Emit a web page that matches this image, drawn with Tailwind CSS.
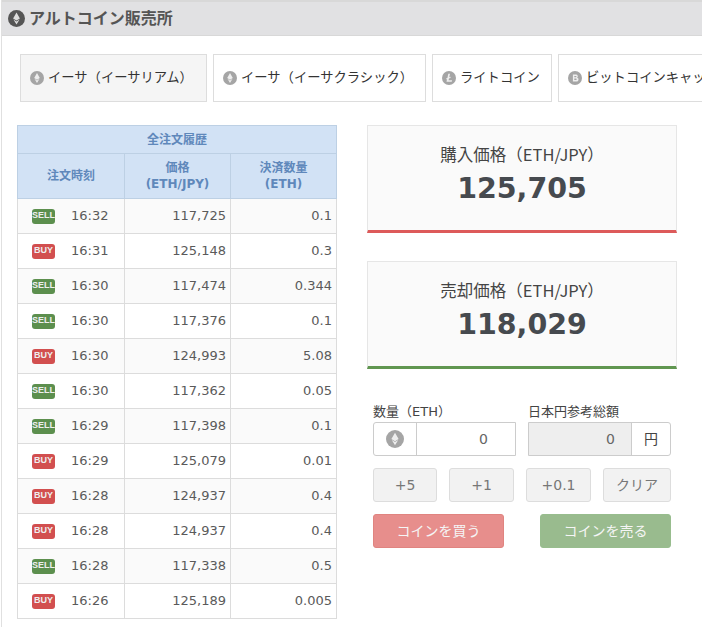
<!DOCTYPE html><html lang="ja">
<head>
  <meta charset="UTF-8">
  <title>アルトコイン販売所</title>
  <script src="https://cdn.jsdelivr.net/npm/@tailwindcss/browser@4"></script>
</head>
<body class="bg-white text-[#444] overflow-hidden h-[627px] font-['DejaVu_Sans','Noto_Sans_CJK_JP',sans-serif]">
  <div class="ml-px border-l border-[#e0e0e0] h-[627px] overflow-hidden">
    <!-- header -->
    <div class="h-9 border-t-2 border-b border-[#d8d8d8] bg-[#e1e1e3] flex items-center pl-1.5 gap-1 text-base font-bold text-[#555]">
      <svg width="17" height="17" viewBox="0 0 20 20"><circle cx="10" cy="10" r="10" fill="#555"/><path d="M10 3l4 7-4 2.400L6 10zM6.400 11.200L10 13.400l3.600-2.200L10 17z" fill="#ddd"/></svg>
      <span>アルトコイン販売所</span>
    </div>

    <!-- coin tabs -->
    <div class="flex gap-1.5 mt-[18px] ml-[18px] w-[800px] text-[13.300px] text-[#333]">
      <div class="w-[187px] h-12 border border-[#ddd] bg-[#f5f5f5] flex items-center pl-[9px] gap-1">
        <svg width="14" height="14" viewBox="0 0 20 20"><circle cx="10" cy="10" r="10" fill="#a5a5a5"/><path d="M10 3l4 7-4 2.400L6 10zM6.400 11.200L10 13.400l3.600-2.200L10 17z" fill="#eee"/></svg>
        <span>イーサ（イーサリアム）</span>
      </div>
      <div class="w-[213px] h-12 border border-[#ddd] flex items-center pl-[9px] gap-1">
        <svg width="14" height="14" viewBox="0 0 20 20"><circle cx="10" cy="10" r="10" fill="#a5a5a5"/><path d="M10 3l4 7-4 2.400L6 10zM6.400 11.200L10 13.400l3.600-2.200L10 17z" fill="#eee"/></svg>
        <span>イーサ（イーサクラシック）</span>
      </div>
      <div class="w-[120px] h-12 border border-[#ddd] flex items-center pl-[9px] gap-1">
        <svg width="14" height="14" viewBox="0 0 20 20"><circle cx="10" cy="10" r="10" fill="#a5a5a5"/><path d="M9 4h2.400l-1 5 2-.8-.4 1.700-2 .8-.6 2.600h5l-.5 2H6.400l.9-3.800-1.500.6.400-1.600 1.500-.6z" fill="#eee"/></svg>
        <span>ライトコイン</span>
      </div>
      <div class="w-[220px] h-12 border border-[#ddd] flex items-center pl-[9px] gap-1">
        <svg width="14" height="14" viewBox="0 0 20 20"><circle cx="10" cy="10" r="10" fill="#a5a5a5"/><path d="M7 5h4.500a2.500 2.500 0 0 1 1.500 4.500A2.800 2.800 0 0 1 11.500 15H7zm2 2v2h2.200a1 1 0 0 0 0-2zm0 3.800V13h2.400a1.100 1.100 0 0 0 0-2.200z" fill="#eee" fill-rule="evenodd"/></svg>
        <span class="whitespace-nowrap">ビットコインキャッシュ</span>
      </div>
    </div>

    <div class="flex mt-[23px] ml-[15px] items-start">
      <!-- order history -->
      <table class="w-[319px] table-fixed border-collapse text-[13px] text-[#5a5a5a]">
        <colgroup><col class="w-[107px]"><col class="w-[106px]"><col class="w-[106px]"></colgroup>
        <thead class="bg-[#d2e2f5] text-[#5f88bb] text-xs font-bold">
          <tr class="h-7"><th colspan="3" class="border border-[#bdd0e4] font-bold">全注文履歴</th></tr>
          <tr class="h-[45px] leading-[16px]">
            <th class="border border-[#bdd0e4] font-bold">注文時刻</th>
            <th class="border border-[#bdd0e4] font-bold">価格<br>(ETH/JPY)</th>
            <th class="border border-[#bdd0e4] font-bold">決済数量<br>(ETH)</th>
          </tr>
        </thead>
        <tbody>
          <tr class="h-[35px] bg-[#fafafa]">
            <td class="border border-[#dcdcdc] pl-3.5"><div class="flex items-center gap-[16px]"><span class="w-[23px] h-[15px] rounded-[3px] bg-[#5c8f4e] text-[#eee] text-[9px] font-bold font-['Liberation_Sans',sans-serif] flex items-center justify-center">SELL</span><span>16:32</span></div></td>
            <td class="border border-[#dcdcdc] text-right pr-1">117,725</td>
            <td class="border border-[#dcdcdc] text-right pr-1">0.1</td>
          </tr>
          <tr class="h-[35px]">
            <td class="border border-[#dcdcdc] pl-3.5"><div class="flex items-center gap-[16px]"><span class="w-[23px] h-[15px] rounded-[3px] bg-[#d24f4f] text-[#eee] text-[9px] font-bold font-['Liberation_Sans',sans-serif] flex items-center justify-center">BUY</span><span>16:31</span></div></td>
            <td class="border border-[#dcdcdc] text-right pr-1">125,148</td>
            <td class="border border-[#dcdcdc] text-right pr-1">0.3</td>
          </tr>
          <tr class="h-[35px] bg-[#fafafa]">
            <td class="border border-[#dcdcdc] pl-3.5"><div class="flex items-center gap-[16px]"><span class="w-[23px] h-[15px] rounded-[3px] bg-[#5c8f4e] text-[#eee] text-[9px] font-bold font-['Liberation_Sans',sans-serif] flex items-center justify-center">SELL</span><span>16:30</span></div></td>
            <td class="border border-[#dcdcdc] text-right pr-1">117,474</td>
            <td class="border border-[#dcdcdc] text-right pr-1">0.344</td>
          </tr>
          <tr class="h-[35px]">
            <td class="border border-[#dcdcdc] pl-3.5"><div class="flex items-center gap-[16px]"><span class="w-[23px] h-[15px] rounded-[3px] bg-[#5c8f4e] text-[#eee] text-[9px] font-bold font-['Liberation_Sans',sans-serif] flex items-center justify-center">SELL</span><span>16:30</span></div></td>
            <td class="border border-[#dcdcdc] text-right pr-1">117,376</td>
            <td class="border border-[#dcdcdc] text-right pr-1">0.1</td>
          </tr>
          <tr class="h-[35px] bg-[#fafafa]">
            <td class="border border-[#dcdcdc] pl-3.5"><div class="flex items-center gap-[16px]"><span class="w-[23px] h-[15px] rounded-[3px] bg-[#d24f4f] text-[#eee] text-[9px] font-bold font-['Liberation_Sans',sans-serif] flex items-center justify-center">BUY</span><span>16:30</span></div></td>
            <td class="border border-[#dcdcdc] text-right pr-1">124,993</td>
            <td class="border border-[#dcdcdc] text-right pr-1">5.08</td>
          </tr>
          <tr class="h-[35px]">
            <td class="border border-[#dcdcdc] pl-3.5"><div class="flex items-center gap-[16px]"><span class="w-[23px] h-[15px] rounded-[3px] bg-[#5c8f4e] text-[#eee] text-[9px] font-bold font-['Liberation_Sans',sans-serif] flex items-center justify-center">SELL</span><span>16:30</span></div></td>
            <td class="border border-[#dcdcdc] text-right pr-1">117,362</td>
            <td class="border border-[#dcdcdc] text-right pr-1">0.05</td>
          </tr>
          <tr class="h-[35px] bg-[#fafafa]">
            <td class="border border-[#dcdcdc] pl-3.5"><div class="flex items-center gap-[16px]"><span class="w-[23px] h-[15px] rounded-[3px] bg-[#5c8f4e] text-[#eee] text-[9px] font-bold font-['Liberation_Sans',sans-serif] flex items-center justify-center">SELL</span><span>16:29</span></div></td>
            <td class="border border-[#dcdcdc] text-right pr-1">117,398</td>
            <td class="border border-[#dcdcdc] text-right pr-1">0.1</td>
          </tr>
          <tr class="h-[35px]">
            <td class="border border-[#dcdcdc] pl-3.5"><div class="flex items-center gap-[16px]"><span class="w-[23px] h-[15px] rounded-[3px] bg-[#d24f4f] text-[#eee] text-[9px] font-bold font-['Liberation_Sans',sans-serif] flex items-center justify-center">BUY</span><span>16:29</span></div></td>
            <td class="border border-[#dcdcdc] text-right pr-1">125,079</td>
            <td class="border border-[#dcdcdc] text-right pr-1">0.01</td>
          </tr>
          <tr class="h-[35px] bg-[#fafafa]">
            <td class="border border-[#dcdcdc] pl-3.5"><div class="flex items-center gap-[16px]"><span class="w-[23px] h-[15px] rounded-[3px] bg-[#d24f4f] text-[#eee] text-[9px] font-bold font-['Liberation_Sans',sans-serif] flex items-center justify-center">BUY</span><span>16:28</span></div></td>
            <td class="border border-[#dcdcdc] text-right pr-1">124,937</td>
            <td class="border border-[#dcdcdc] text-right pr-1">0.4</td>
          </tr>
          <tr class="h-[35px]">
            <td class="border border-[#dcdcdc] pl-3.5"><div class="flex items-center gap-[16px]"><span class="w-[23px] h-[15px] rounded-[3px] bg-[#d24f4f] text-[#eee] text-[9px] font-bold font-['Liberation_Sans',sans-serif] flex items-center justify-center">BUY</span><span>16:28</span></div></td>
            <td class="border border-[#dcdcdc] text-right pr-1">124,937</td>
            <td class="border border-[#dcdcdc] text-right pr-1">0.4</td>
          </tr>
          <tr class="h-[35px] bg-[#fafafa]">
            <td class="border border-[#dcdcdc] pl-3.5"><div class="flex items-center gap-[16px]"><span class="w-[23px] h-[15px] rounded-[3px] bg-[#5c8f4e] text-[#eee] text-[9px] font-bold font-['Liberation_Sans',sans-serif] flex items-center justify-center">SELL</span><span>16:28</span></div></td>
            <td class="border border-[#dcdcdc] text-right pr-1">117,338</td>
            <td class="border border-[#dcdcdc] text-right pr-1">0.5</td>
          </tr>
          <tr class="h-[35px]">
            <td class="border border-[#dcdcdc] pl-3.5"><div class="flex items-center gap-[16px]"><span class="w-[23px] h-[15px] rounded-[3px] bg-[#d24f4f] text-[#eee] text-[9px] font-bold font-['Liberation_Sans',sans-serif] flex items-center justify-center">BUY</span><span>16:26</span></div></td>
            <td class="border border-[#dcdcdc] text-right pr-1">125,189</td>
            <td class="border border-[#dcdcdc] text-right pr-1">0.005</td>
          </tr>
        </tbody>
      </table>

      <!-- price and order form -->
      <div class="ml-[30px] w-[310px]">
        <div class="h-[108px] border border-b-[3px] border-[#e6e6e6] border-b-[#dd5a5a] bg-[#fafafa] flex flex-col items-center pt-4">
          <div class="text-[16.500px] leading-[24px] font-['Noto_Sans_CJK_JP',sans-serif]">購入価格（ETH/JPY）</div>
          <div class="text-[28.500px] leading-[38px] mt-1 font-bold text-[#464a4f]">125,705</div>
        </div>
        <div class="h-[108px] mt-7 border border-b-[3px] border-[#e6e6e6] border-b-[#609650] bg-[#fafafa] flex flex-col items-center pt-4">
          <div class="text-[16.500px] leading-[24px] font-['Noto_Sans_CJK_JP',sans-serif]">売却価格（ETH/JPY）</div>
          <div class="text-[28.500px] leading-[38px] mt-1 font-bold text-[#464a4f]">118,029</div>
        </div>

        <div class="mt-[34px] ml-1.5 w-[298px] text-[13px]">
          <div class="flex">
            <div class="w-[143px] mr-3">
              <div class="leading-[17px] mb-0.5">数量（ETH）</div>
              <div class="flex h-[34px] border border-[#ccc] rounded-l-[3px]">
                <div class="w-[43px] border-r border-[#ccc] flex items-center justify-center">
                  <svg width="18" height="18" viewBox="0 0 20 20"><circle cx="10" cy="10" r="10" fill="#a5a5a5"/><path d="M10 3l4 7-4 2.400L6 10zM6.400 11.200L10 13.400l3.600-2.200L10 17z" fill="#eee"/></svg>
                </div>
                <div class="flex-1 flex items-center justify-end pr-[27px] text-sm text-[#666]">0</div>
              </div>
            </div>
            <div class="w-[143px]">
              <div class="leading-[17px] mb-0.5">日本円参考総額</div>
              <div class="flex h-[34px] border border-[#ccc] rounded-r-[3px]">
                <div class="w-[103px] bg-[#eee] border-r border-[#ccc] flex items-center justify-end pr-4 text-sm text-[#666]">0</div>
                <div class="flex-1 flex items-center justify-center text-sm">円</div>
              </div>
            </div>
          </div>
          <div class="flex justify-between mt-3 text-sm text-[#777]">
            <div class="w-16 h-[34px] rounded-[3px] border border-[#ddd] bg-[#f2f2f2] flex items-center justify-center">+5</div>
            <div class="w-[65px] h-[34px] rounded-[3px] border border-[#ddd] bg-[#f2f2f2] flex items-center justify-center">+1</div>
            <div class="w-[65px] h-[34px] rounded-[3px] border border-[#ddd] bg-[#f2f2f2] flex items-center justify-center">+0.1</div>
            <div class="w-[68px] h-[34px] rounded-[3px] border border-[#ddd] bg-[#f2f2f2] flex items-center justify-center">クリア</div>
          </div>
          <div class="flex justify-between mt-3 text-sm text-[#f5f5f5]">
            <div class="w-[131px] h-[34px] rounded-[3px] border border-[#e08480] bg-[#e78e8c] flex items-center justify-center">コインを買う</div>
            <div class="w-[131px] h-[34px] rounded-[3px] border border-[#98bd8e] bg-[#99bb8e] flex items-center justify-center">コインを売る</div>
          </div>
        </div>
      </div>
    </div>
  </div>
</body>
</html>
